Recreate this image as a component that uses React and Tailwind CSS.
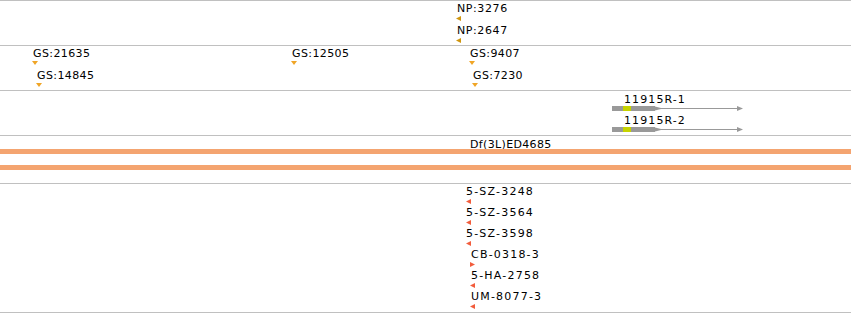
import React from 'react'

// tracks are lists of rows, each row holds features placed at their genome x
const npRows = [
  [{ label: 'NP:3276', x: 456 }],
  [{ label: 'NP:2647', x: 456 }],
]

const gsRows = [
  [
    { label: 'GS:21635', x: 32 },
    { label: 'GS:12505', x: 291 },
    { label: 'GS:9407', x: 469 },
  ],
  [
    { label: 'GS:14845', x: 36 },
    { label: 'GS:7230', x: 472 },
  ],
]

const insertionRows = [
  { label: '5-SZ-3248', x: 466, dir: 'left', pad: '' },
  { label: '5-SZ-3564', x: 466, dir: 'left', pad: '' },
  { label: '5-SZ-3598', x: 466, dir: 'left', pad: '' },
  { label: 'CB-0318-3', x: 470, dir: 'right', pad: 'pl-px' },
  { label: '5-HA-2758', x: 470, dir: 'left', pad: 'pl-px' },
  { label: 'UM-8077-3', x: 470, dir: 'left', pad: 'pl-px' },
]

const Tri = ({ dir, color }) => {
  const pts = {
    left: '0,2.5 5,0 5,5',
    right: '0,0 5,2.5 0,5',
    down: '0,0 6,0 3,4',
  }[dir]
  const w = dir === 'down' ? 6 : 5
  const h = dir === 'down' ? 4 : 5
  return (
    <svg className="mt-px block" width={w} height={h}>
      <polygon points={pts} fill={color} />
    </svg>
  )
}

const Feature = ({ x, children }) => (
  <div className="absolute top-0 flex flex-col items-start" style={{ left: x }}>
    {children}
  </div>
)

const Track = ({ className = '', children }) => (
  <div className={`relative w-full border-t border-[#c0c0c0] ${className}`}>{children}</div>
)

const GeneGlyph = () => (
  <svg className="block" width="134" height="5">
    <line x1="43" y1="2.5" x2="128" y2="2.5" stroke="#999" strokeWidth="1" />
    <rect x="0" y="0" width="43" height="5" fill="#999" />
    <rect x="11" y="0" width="8" height="5" fill="#c6d300" />
    <polygon points="43,0.5 51,2.5 43,4.5" fill="#999" />
    <polygon points="125,0 131,2.5 125,5" fill="#999" />
  </svg>
)

export default function App() {
  return (
    <div className="w-[851px] h-[313px] bg-white overflow-hidden text-[11px] leading-[13px] text-black font-['DejaVu_Sans',sans-serif]">
      <Track className="h-[45px] flex flex-col pt-px">
        {npRows.map((row, i) => (
          <div key={i} className="relative h-[22px]">
            {row.map((f) => (
              <Feature key={f.label} x={f.x}>
                <span className="pl-px tracking-[0.6px] whitespace-nowrap">{f.label}</span>
                <Tri dir="left" color="#cf960f" />
              </Feature>
            ))}
          </div>
        ))}
      </Track>

      <Track className="h-[45px] flex flex-col pt-px">
        {gsRows.map((row, i) => (
          <div key={i} className="relative h-[22px]">
            {row.map((f) => (
              <Feature key={f.label} x={f.x}>
                <span className="pl-px tracking-[0.4px] whitespace-nowrap">{f.label}</span>
                <Tri dir="down" color="#f0a526" />
              </Feature>
            ))}
          </div>
        ))}
      </Track>

      <Track className="h-[45px] flex flex-col pt-[2px]">
        {['11915R-1', '11915R-2'].map((name) => (
          <div key={name} className="relative h-[22px]">
            <Feature x={612}>
              <span className="pl-[12px] tracking-[1.1px] whitespace-nowrap">{name}</span>
              <GeneGlyph />
            </Feature>
          </div>
        ))}
      </Track>

      <Track className="h-[48px] flex flex-col pt-[2px]">
        <div className="h-[11px] pl-[470px] tracking-[0.35px] whitespace-nowrap">Df(3L)ED4685</div>
        <div className="h-[5px] w-full bg-[#f4a470]" />
        <div className="h-[5px] w-full bg-[#f4a470] mt-[11px]" />
      </Track>

      <Track className="h-[130px] border-b flex flex-col pt-px">
        {insertionRows.map((f) => (
          <div key={f.label} className="relative h-[21px]">
            <Feature x={f.x}>
              <span className={`${f.pad} tracking-[1.2px] whitespace-nowrap`}>{f.label}</span>
              <Tri dir={f.dir} color="#f25d3d" />
            </Feature>
          </div>
        ))}
      </Track>
    </div>
  )
}
